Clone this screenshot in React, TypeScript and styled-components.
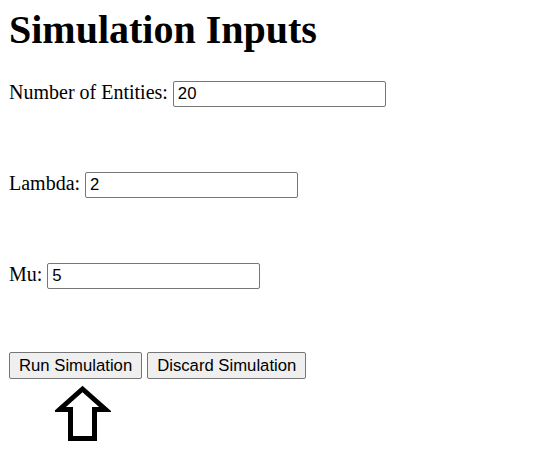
import React, { useState } from "react";
import styled, { createGlobalStyle } from "styled-components";

// Simulation inputs form
const App: React.FC = () => {
  const [entities, setEntities] = useState("20");
  const [lambda, setLambda] = useState("2");
  const [mu, setMu] = useState("5");

  return (
    <>
      <GlobalStyle />
      <Page>
        <Title>Simulation Inputs</Title>
        <Form>
          <Row>
            <Label htmlFor="entities">Number of Entities:</Label>
            <Input id="entities" value={entities} onChange={(e) => setEntities(e.target.value)} />
          </Row>
          <Row>
            <Label htmlFor="lambda">Lambda:</Label>
            <Input id="lambda" value={lambda} onChange={(e) => setLambda(e.target.value)} />
          </Row>
          <Row>
            <Label htmlFor="mu">Mu:</Label>
            <Input id="mu" value={mu} onChange={(e) => setMu(e.target.value)} />
          </Row>
          <Actions>
            <Button type="button">Run Simulation</Button>
            <Button type="button">Discard Simulation</Button>
          </Actions>
        </Form>
        <Pointer viewBox="0 0 56 62" width="56" height="62">
          <path
            d="M27.5 7 L50.5 27.5 L39.5 27.5 L39.5 56.5 L15.5 56.5 L15.5 27.5 L4.5 27.5 Z"
            fill="#fff"
            stroke="#000"
            strokeWidth="5"
            strokeLinejoin="miter"
          />
        </Pointer>
      </Page>
    </>
  );
};

export default App;

//
// --------------------- STYLED COMPONENTS ---------------------
//

const GlobalStyle = createGlobalStyle`
  body {
    margin: 0;
    background: #fff;
    color: #000;
    font-family: "Liberation Serif", "Times New Roman", serif;
  }
`;

const Page = styled.div`
  padding: 6px 9px;
  display: flex;
  flex-direction: column;
`;

const Title = styled.h1`
  margin: 0;
  font-size: 40px;
  font-weight: bold;
`;

const Form = styled.form`
  display: flex;
  flex-direction: column;
  gap: 65px;
  margin-top: 28px;
`;

const Row = styled.div`
  display: flex;
  align-items: baseline;
  gap: 5px;
`;

const Label = styled.label`
  font-size: 20px;
`;

const Input = styled.input`
  box-sizing: border-box;
  width: 213px;
  height: 26px;
  padding: 0 4px;
  border: 1px solid #767676;
  border-radius: 2px;
  font-family: "Liberation Sans", Arial, sans-serif;
  font-size: 16.7px;
  color: #000;
  outline: none;
`;

const Actions = styled.div`
  display: flex;
  gap: 5px;
  margin-top: -2px;
`;

const Button = styled.button`
  box-sizing: border-box;
  height: 27px;
  padding: 0 9px;
  border: 1px solid #767676;
  border-radius: 2px;
  background: #efefef;
  font-family: "Liberation Sans", Arial, sans-serif;
  font-size: 16.7px;
  color: #000;
`;

const Pointer = styled.svg`
  display: block;
  margin: 3px 0 0 46px;
`;
